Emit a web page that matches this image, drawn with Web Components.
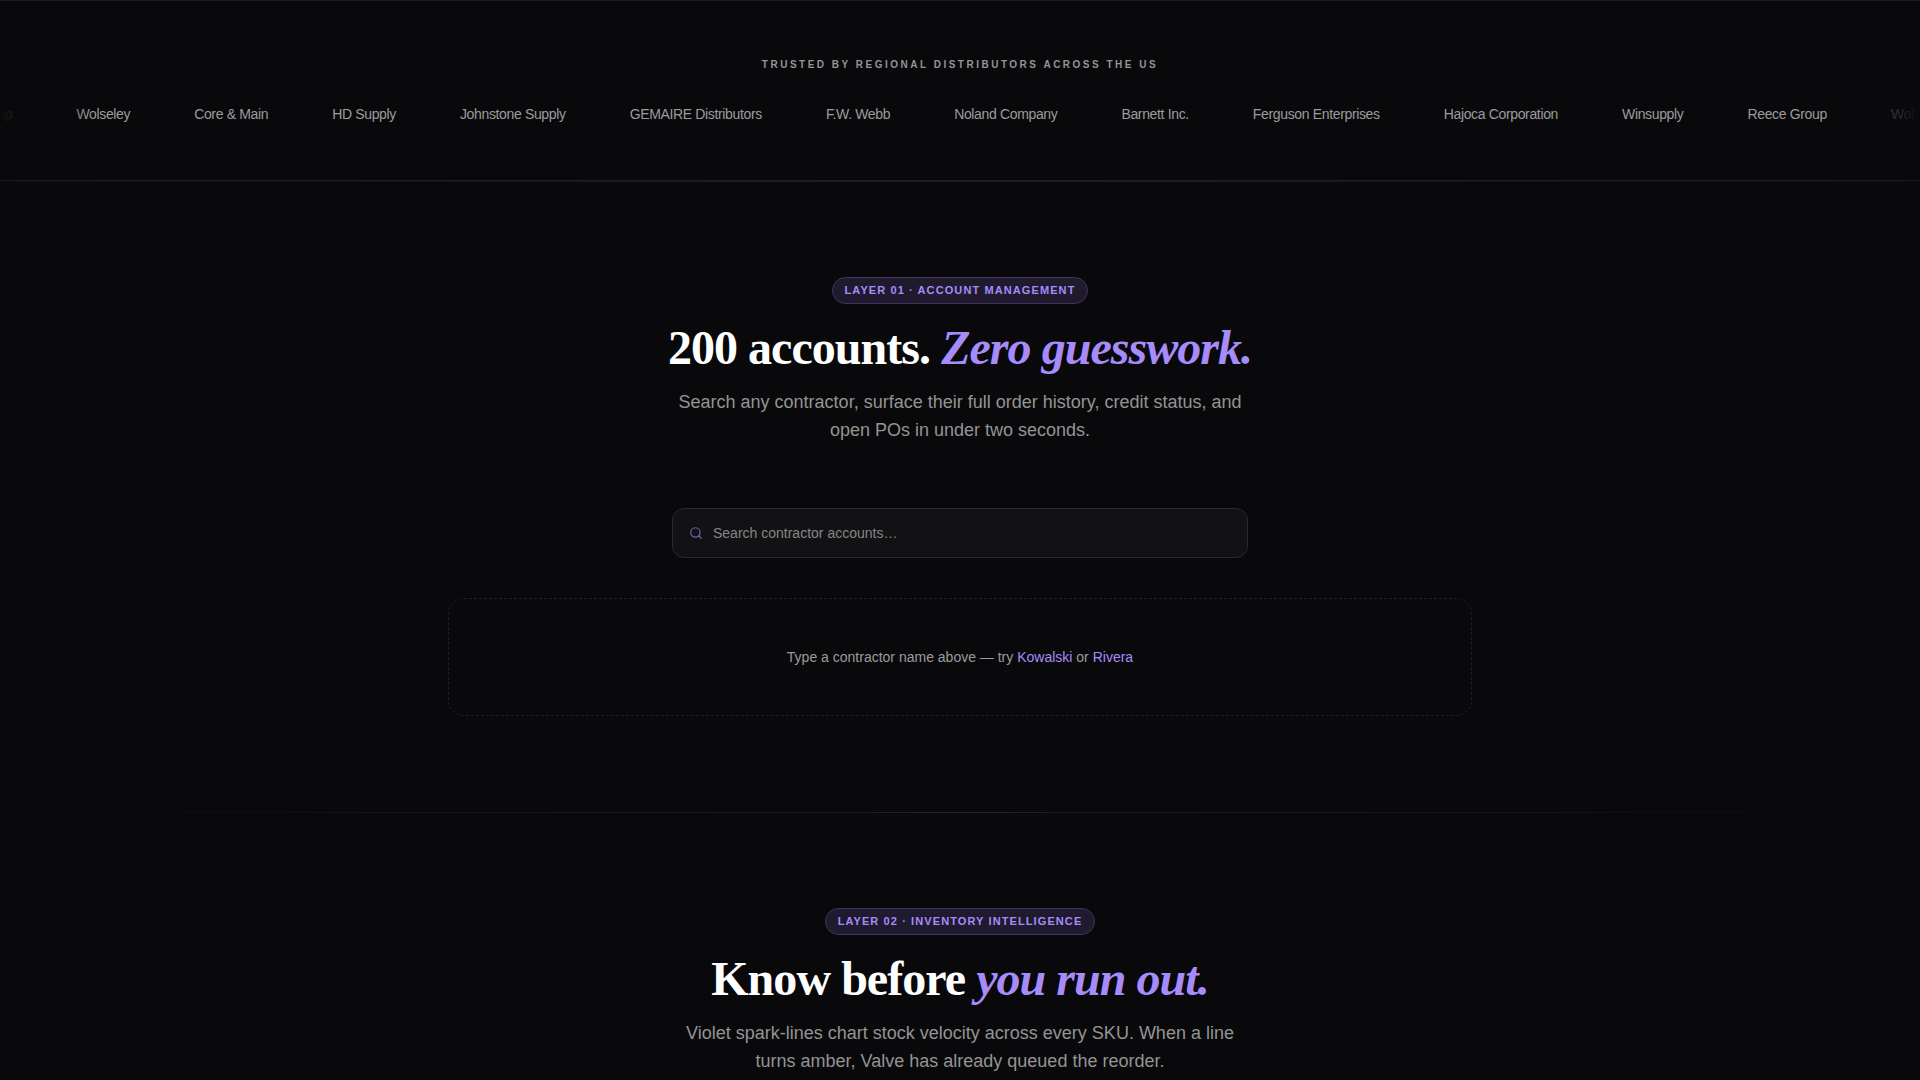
<!DOCTYPE html>
<html lang="en">
<head>
<meta charset="utf-8">
<meta name="viewport" content="width=device-width, initial-scale=1">
<title>Valve</title>
<style>
  :root {
    --bg: #09090b;
    --surface: #121214;
    --line: #1f1f22;
    --muted: #949494;
    --violet: #a78bfa;
  }
  html { background: var(--bg); }
  body {
    margin: 0;
    background: var(--bg);
    color: #fafafa;
    font-family: "Liberation Sans", Arial, sans-serif;
    overflow-x: hidden;
  }
</style>
</head>
<body>
<logo-strip label="Trusted by regional distributors across the US">
  <logo-name>Reece Group</logo-name>
  <logo-name>Wolseley</logo-name>
  <logo-name>Core &amp; Main</logo-name>
  <logo-name>HD Supply</logo-name>
  <logo-name>Johnstone Supply</logo-name>
  <logo-name>GEMAIRE Distributors</logo-name>
  <logo-name>F.W. Webb</logo-name>
  <logo-name>Noland Company</logo-name>
  <logo-name>Barnett Inc.</logo-name>
  <logo-name>Ferguson Enterprises</logo-name>
  <logo-name>Hajoca Corporation</logo-name>
  <logo-name>Winsupply</logo-name>
  <logo-name>Reece Group</logo-name>
  <logo-name>Wolseley</logo-name>
</logo-strip>

<layer-section>
  <layer-badge slot="badge">Layer 01 · Account Management</layer-badge>
  <span slot="title">200 accounts.</span>
  <span slot="accent">Zero guesswork.</span>
  <span slot="lead">Search any contractor, surface their full order history, credit status, and open POs in under two seconds.</span>
  <account-search></account-search>
  <empty-hint>Type a contractor name above — try <name-link>Kowalski</name-link> or <name-link>Rivera</name-link></empty-hint>
</layer-section>

<layer-section>
  <layer-badge slot="badge">Layer 02 · Inventory Intelligence</layer-badge>
  <span slot="title">Know before</span>
  <span slot="accent">you run out.</span>
  <span slot="lead">Violet spark-lines chart stock velocity across every SKU. When a line turns amber, Valve has already queued the reorder.</span>
</layer-section>

<script>
  const define = (name, html, setup) => customElements.define(name, class extends HTMLElement {
    constructor() {
      super();
      this.attachShadow({ mode: 'open' }).innerHTML = html;
    }
    connectedCallback() { if (setup) setup(this, this.shadowRoot); }
  });

  define('logo-strip', `
    <style>
      :host {
        display: block;
        position: relative;
        overflow: hidden;
        padding: 56px 0;
        border-top: 1px solid var(--line);
        border-bottom: 1px solid var(--line);
      }
      p {
        margin: 0 0 32px;
        text-align: center;
        font-size: 10px;
        line-height: 15px;
        font-weight: 700;
        letter-spacing: 0.25em;
        text-transform: uppercase;
        color: var(--muted);
      }
      .track { display: flex; gap: 64px; width: max-content; margin-left: -67px; }
      .fade { position: absolute; top: 0; bottom: 0; width: 96px; pointer-events: none; }
      .left { left: 0; background: linear-gradient(to right, var(--bg), transparent); }
      .right { right: 0; background: linear-gradient(to left, var(--bg), transparent); }
    </style>
    <p></p>
    <div class="track"><slot></slot></div>
    <div class="fade left"></div>
    <div class="fade right"></div>`,
    (el, root) => { root.querySelector('p').textContent = el.getAttribute('label'); });

  define('logo-name', `
    <style>
      :host {
        display: block;
        white-space: nowrap;
        font-size: 14px;
        line-height: 20px;
        letter-spacing: -0.025em;
        color: #9c9c9c;
      }
    </style>
    <slot></slot>`);

  define('layer-badge', `
    <style>
      :host {
        display: inline-block;
        padding: 4px 12px;
        border: 1px solid #40365f;
        border-radius: 999px;
        background: #1f1a2e;
        color: var(--violet);
        font-size: 11px;
        line-height: 17px;
        font-weight: 700;
        letter-spacing: 0.1em;
        text-transform: uppercase;
      }
    </style>
    <slot></slot>`);

  define('layer-section', `
    <style>
      :host { display: block; position: relative; }
      .rule {
        position: absolute;
        top: 0;
        left: 0;
        right: 0;
        height: 1px;
        background: linear-gradient(to right, transparent, #211d36, transparent);
      }
      section { padding: 96px 24px; }
      header {
        display: flex;
        flex-direction: column;
        align-items: center;
        text-align: center;
      }
      h2 {
        margin: 16px 0 12px;
        font-family: "Liberation Serif", "Times New Roman", serif;
        font-size: 48px;
        line-height: 56px;
        font-weight: 700;
        letter-spacing: -0.02em;
        color: #fff;
      }
      em { color: var(--violet); }
      p {
        margin: 0;
        max-width: 576px;
        font-size: 18px;
        line-height: 28px;
        color: var(--muted);
      }
    </style>
    <div class="rule"></div>
    <section>
      <header>
        <slot name="badge"></slot>
        <h2><slot name="title"></slot> <em><slot name="accent"></slot></em></h2>
        <p><slot name="lead"></slot></p>
      </header>
      <slot></slot>
    </section>`);

  define('account-search', `
    <style>
      :host { display: block; max-width: 576px; margin: 64px auto 40px; }
      label {
        display: flex;
        align-items: center;
        gap: 10px;
        padding: 0 16px;
        border: 1px solid #2a2738;
        border-radius: 12px;
        background: var(--surface);
      }
      svg { flex: none; width: 14px; height: 14px; }
      input {
        flex: 1;
        min-width: 0;
        height: 48px;
        padding: 0;
        border: 0;
        outline: 0;
        background: none;
        color: #fafafa;
        font: 14px/20px "Liberation Sans", Arial, sans-serif;
      }
      input::placeholder { color: #868686; opacity: 1; }
    </style>
    <label>
      <svg viewBox="0 0 24 24" fill="none" stroke="#7562b8" stroke-width="2" stroke-linecap="round" stroke-linejoin="round" aria-hidden="true"><circle cx="11" cy="11" r="8"/><path d="m21 21-4.3-4.3"/></svg>
      <input type="text" aria-label="Search contractor accounts" placeholder="Search contractor accounts…">
    </label>`);

  define('empty-hint', `
    <style>
      :host {
        display: block;
        max-width: 1022px;
        margin: 0 auto;
        padding: 48px 0;
        border: 1px dashed var(--line);
        border-radius: 16px;
        text-align: center;
        font-size: 14px;
        line-height: 20px;
        color: #9c9c9c;
      }
    </style>
    <slot></slot>`);

  define('name-link', `
    <style>
      :host { display: inline; }
      a { color: var(--violet); text-decoration: none; }
    </style>
    <a href="#"><slot></slot></a>`);
</script>
</body>
</html>
